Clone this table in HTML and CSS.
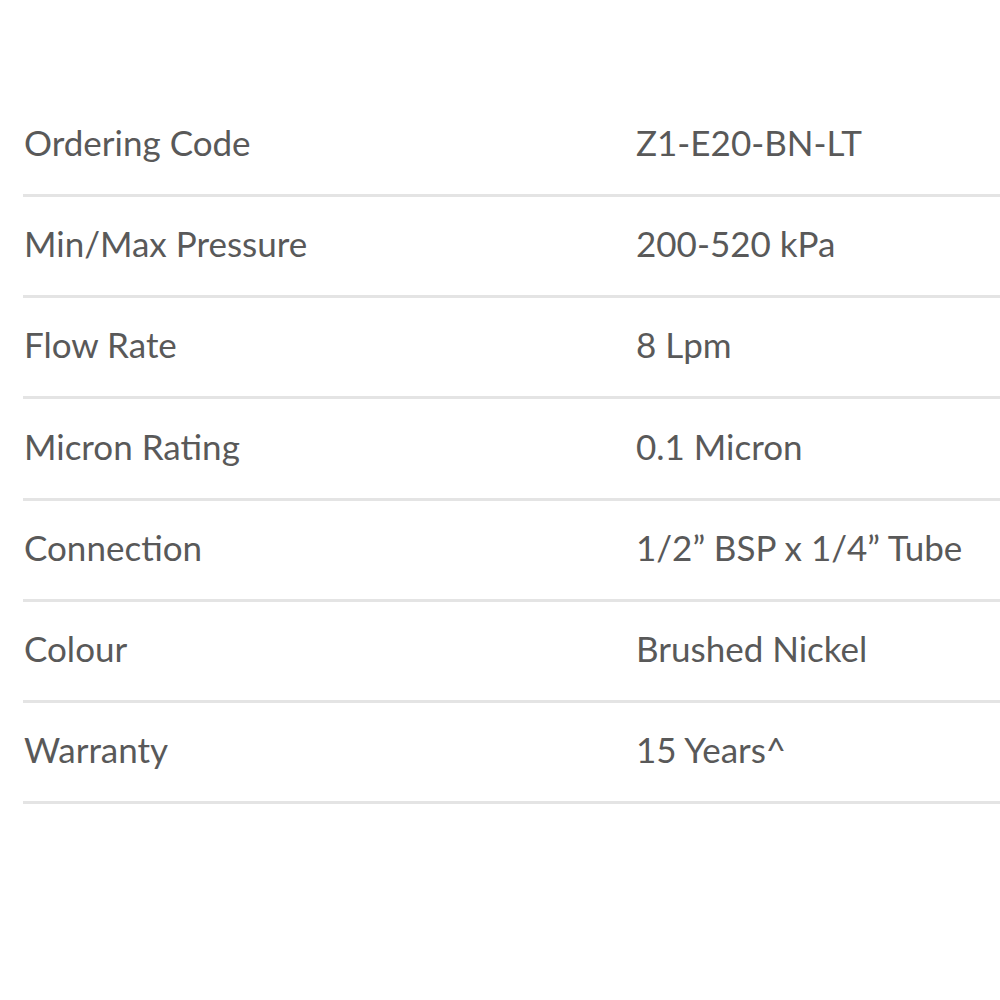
FILE: index.html
```html
<!DOCTYPE html>
<html>
<head>
<meta charset="utf-8">
<link rel="stylesheet" href="styles.css">
</head>
<body>
<div class="specs">
  <div class="row"><div class="label">Ordering Code</div><div class="value">Z1-E20-BN-LT</div></div>
  <div class="row"><div class="label">Min/Max Pressure</div><div class="value">200-520 kPa</div></div>
  <div class="row"><div class="label">Flow Rate</div><div class="value">8 Lpm</div></div>
  <div class="row"><div class="label">Micron Rating</div><div class="value">0.1 Micron</div></div>
  <div class="row"><div class="label">Connection</div><div class="value">1/2” BSP x 1/4” Tube</div></div>
  <div class="row"><div class="label">Colour</div><div class="value">Brushed Nickel</div></div>
  <div class="row"><div class="label">Warranty</div><div class="value">15 Years^</div></div>
</div>
</body>
</html>
```
FILE: styles.css
```css
html, body {
  margin: 0;
  padding: 0;
  background: #fff;
}
.specs {
  margin: 96px 0 0 23px;
  font-family: Lato, "Open Sans", sans-serif;
  font-size: 35px;
  color: #595959;
}
.row {
  display: flex;
  align-items: center;
  height: 92.17px;
  padding-bottom: 6px;
  border-bottom: 3px solid #e4e4e4;
}
.label {
  width: 613px;
  padding-left: 1px;
  box-sizing: border-box;
}
.value {
  flex: 1;
}
```
